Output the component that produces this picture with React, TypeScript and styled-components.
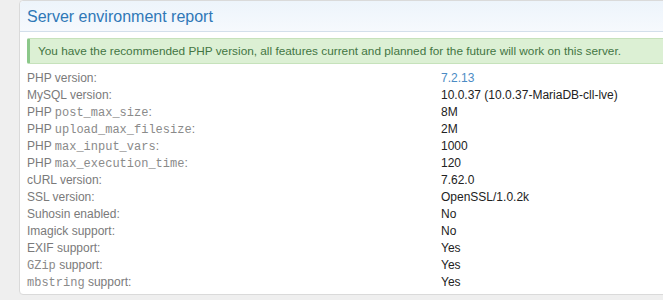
import React from 'react';
import styled, { createGlobalStyle } from 'styled-components';

const GlobalStyle = createGlobalStyle`
  body {
    margin: 0;
    background: #efefef;
    font-family: "Liberation Sans", Arial, sans-serif;
    overflow: hidden;
  }
`;

const Page = styled.div`
  width: 663px;
  height: 300px;
  overflow: hidden;
`;

const Panel = styled.div`
  margin: 0 -40px 0 19px;
  background: #fff;
  border: 1px solid #dadada;
  border-radius: 4px;
  padding-bottom: 3px;
`;

const Header = styled.div`
  background: linear-gradient(to bottom, #edf4fb, #f6f9fd);
  border-bottom: 1px solid #d3dfeb;
  border-radius: 4px 4px 0 0;
  padding: 6px 7px 5px;
  height: 19px;
`;

const Title = styled.h2`
  margin: 0;
  font-size: 16px;
  font-weight: normal;
  line-height: 19px;
  color: #2f78b7;
`;

const Body = styled.div`
  padding: 6px 0 0 7px;
`;

const Notice = styled.div`
  background: #dcf0d4;
  border: 1px solid #c6e2bb;
  border-left: 3px solid #8cc88a;
  border-radius: 2px;
  color: #437543;
  font-size: 11.8px;
  line-height: 24px;
  padding: 0 8px;
`;

const List = styled.dl`
  margin: 6px 0 0;
  display: grid;
  grid-template-columns: 414px 1fr;
  grid-auto-rows: 17px;
  font-size: 12px;
  line-height: 17px;
`;

const Label = styled.dt`
  margin: 0;
  color: #7a7a7a;
  white-space: nowrap;
`;

const Value = styled.dd<{ $link?: boolean }>`
  margin: 0;
  color: ${(p) => (p.$link ? '#4b8bc4' : '#222')};
  white-space: nowrap;
`;

const Code = styled.code`
  font-family: "Liberation Mono", "Courier New", monospace;
  font-size: 12px;
  line-height: 17px;
  color: #8a8a8a;
`;

type Row = { label: React.ReactNode; value: string; link?: boolean };

const rows: Row[] = [
  { label: 'PHP version:', value: '7.2.13', link: true },
  { label: 'MySQL version:', value: '10.0.37 (10.0.37-MariaDB-cll-lve)' },
  { label: <>PHP <Code>post_max_size</Code>:</>, value: '8M' },
  { label: <>PHP <Code>upload_max_filesize</Code>:</>, value: '2M' },
  { label: <>PHP <Code>max_input_vars</Code>:</>, value: '1000' },
  { label: <>PHP <Code>max_execution_time</Code>:</>, value: '120' },
  { label: 'cURL version:', value: '7.62.0' },
  { label: 'SSL version:', value: 'OpenSSL/1.0.2k' },
  { label: 'Suhosin enabled:', value: 'No' },
  { label: 'Imagick support:', value: 'No' },
  { label: 'EXIF support:', value: 'Yes' },
  { label: <><Code>GZip</Code> support:</>, value: 'Yes' },
  { label: <><Code>mbstring</Code> support:</>, value: 'Yes' },
];

export default function App() {
  return (
    <Page>
      <GlobalStyle />
      <Panel>
        <Header>
          <Title>Server environment report</Title>
        </Header>
        <Body>
          <Notice>
            You have the recommended PHP version, all features current and planned for the future will work on this server.
          </Notice>
          <List>
            {rows.map((row, i) => (
              <React.Fragment key={i}>
                <Label>{row.label}</Label>
                <Value $link={row.link}>{row.value}</Value>
              </React.Fragment>
            ))}
          </List>
        </Body>
      </Panel>
    </Page>
  );
}
